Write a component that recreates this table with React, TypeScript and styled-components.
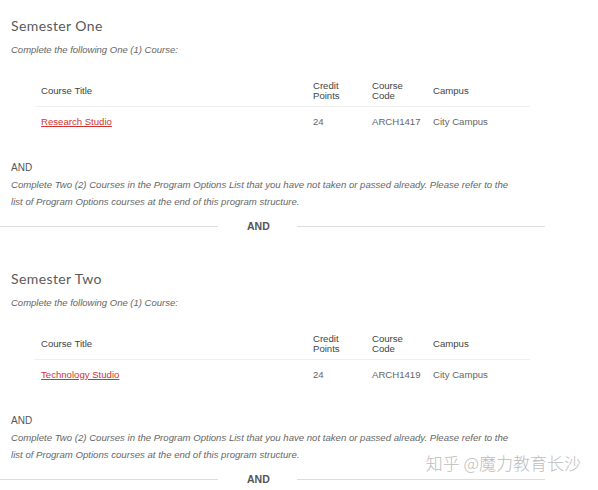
import React from "react";
import styled, { createGlobalStyle } from "styled-components";

const GlobalStyle = createGlobalStyle`
  html, body {
    margin: 0;
    padding: 0;
    background: #fff;
  }
  body {
    font-family: "Liberation Sans", Arial, sans-serif;
    color: #555;
  }
`;

const Page = styled.div`
  position: relative;
  width: 598px;
  height: 490px;
  overflow: hidden;
`;

const Section = styled.section`
  padding-top: 17px;
  & + & {
    padding-top: 37px;
  }
`;

const Heading = styled.h3`
  margin: 0 0 0 11px;
  font-family: Lato, "Open Sans", sans-serif;
  font-size: 14px;
  font-weight: 400;
  letter-spacing: 0.4px;
  line-height: 18px;
  color: #5a5a5a;
`;

const Note = styled.p`
  margin: 7px 0 0 11px;
  font-size: 9.5px;
  font-style: italic;
  line-height: 16px;
  color: #666;
`;

const Table = styled.div`
  margin: 17px 0 0 35px;
  width: 495px;
  font-size: 9.6px;
  color: #555;
`;

const Row = styled.div<{ $head?: boolean }>`
  display: grid;
  grid-template-columns: 272px 59px 61px 1fr;
  align-items: center;
  height: ${(p) => (p.$head ? "31px" : "30px")};
  border-bottom: ${(p) => (p.$head ? "1px solid #eee" : "none")};
  color: ${(p) => (p.$head ? "#444" : "#666")};
`;

const Cell = styled.div`
  padding-left: 6px;
  line-height: 10px;
`;

const CourseLink = styled.a`
  color: #d2342f;
  text-decoration: underline;
  text-underline-offset: 1px;
`;

const AndLabel = styled.div`
  margin: 25px 0 0 11px;
  font-size: 10px;
  line-height: 12px;
  color: #555;
`;

const Paragraph = styled.p`
  margin: 3px 0 0 11px;
  font-size: 9.6px;
  font-style: italic;
  line-height: 16.5px;
  color: #666;
`;

const Line = styled.span`
  display: block;
  width: fit-content;
  white-space: nowrap;
`;

const Divider = styled.div`
  display: flex;
  align-items: center;
  width: 545px;
  margin-top: 9px;
`;

const Rule = styled.span<{ $w?: number }>`
  height: 1px;
  background: #ddd;
  ${(p) => (p.$w ? `width: ${p.$w}px;` : "flex: 1;")}
`;

const DividerText = styled.span`
  padding: 0 27px 0 29px;
  font-size: 10.5px;
  font-weight: 700;
  line-height: 14px;
  color: #555;
`;

const Watermark = styled.div`
  position: absolute;
  right: 17px;
  bottom: 19px;
  font-family: "Noto Sans CJK SC", sans-serif;
  font-size: 17px;
  font-weight: 300;
  line-height: 17px;
  color: #bdbdbd;
  text-shadow: 0 0 2px #fff, 0 0 2px #fff;
`;

type Semester = { title: string; course: string; code: string };

const semesters: Semester[] = [
  { title: "Semester One", course: "Research Studio", code: "ARCH1417" },
  { title: "Semester Two", course: "Technology Studio", code: "ARCH1419" },
];

const SemesterBlock = ({ s }: { s: Semester }) => (
  <Section>
    <Heading>{s.title}</Heading>
    <Note>Complete the following One (1) Course:</Note>
    <Table>
      <Row $head>
        <Cell>Course Title</Cell>
        <Cell>Credit<br />Points</Cell>
        <Cell>Course<br />Code</Cell>
        <Cell>Campus</Cell>
      </Row>
      <Row>
        <Cell><CourseLink href="#">{s.course}</CourseLink></Cell>
        <Cell>24</Cell>
        <Cell>{s.code}</Cell>
        <Cell>City Campus</Cell>
      </Row>
    </Table>
    <AndLabel>AND</AndLabel>
    <Paragraph>
      <Line>
        Complete Two (2) Courses in the Program Options List that you have not taken or passed already. Please refer to the
      </Line>
      <Line>list of Program Options courses at the end of this program structure.</Line>
    </Paragraph>
    <Divider>
      <Rule $w={218} />
      <DividerText>AND</DividerText>
      <Rule />
    </Divider>
  </Section>
);

export default function App() {
  return (
    <Page>
      <GlobalStyle />
      {semesters.map((s) => (
        <SemesterBlock key={s.title} s={s} />
      ))}
      <Watermark>知乎 @魔力教育长沙</Watermark>
    </Page>
  );
}
